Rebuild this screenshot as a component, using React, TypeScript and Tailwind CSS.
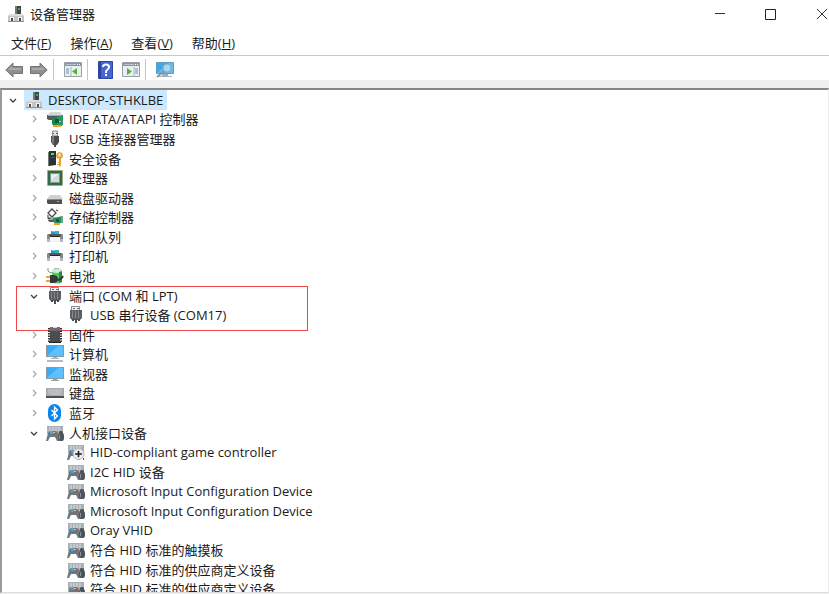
import type { ReactNode } from "react";
import clsx from "clsx";

interface TreeItem {
  label: string;
  level: number;
  icon: ReactNode;
  state?: "open" | "closed";
  selected?: boolean;
  marked?: boolean;
}

function Icon({ children }: { children: ReactNode }) {
  return (
    <svg viewBox="0 0 18 18" className="w-[18px] h-[18px] shrink-0" aria-hidden="true">
      {children}
    </svg>
  );
}

/* ---------- device icons ---------- */

function ComputerNodeIcon() {
  return (
    <Icon>
      <path d="M8 1h6v9H8z" fill="#3f4447" />
      <path d="M8 1h2v9H8z" fill="#74787a" />
      <path d="M11 3h2v2h-2z" fill="#3fae49" />
      <path d="M3 9h12l2 2v6H1v-6z" fill="#c3c5c7" />
      <path d="M3 9h12l2 2H1z" fill="#dcdddd" />
      <path d="M3 12h4v4H3zM11 12h4v4h-4z" fill="#f2f2f2" />
      <path d="M4 13h2v3H4zM12 13h2v3h-2z" fill="#4b4d4f" />
      <path d="M1 16h16v1H1z" fill="#8d8f91" />
    </Icon>
  );
}

function IdeIcon() {
  return (
    <Icon>
      <path d="M4 2h10l3 4H1z" fill="#d4d6d7" />
      <path d="M1 5h16v5H3L1 9z" fill="#55595b" />
      <path d="M2 5h14v1H2z" fill="#a9adaf" />
      <path d="M6 8h10v8H8l-2-2z" fill="#1f8455" />
      <path d="M11 7l6-2v10h-6z" fill="#2b9765" />
      <path d="M9 9h4v4H9z" fill="#0e5a38" />
      <path d="M13 11h2v1h-2z" fill="#9fe0b8" />
      <path d="M7 15h8v2H7z" fill="#e8a524" />
    </Icon>
  );
}

function UsbIcon() {
  return (
    <Icon>
      <path d="M6.500 1h5v5h-5z" fill="#e6e6e6" stroke="#8a8a8a" strokeWidth="1" />
      <path d="M7 3h1v1H7zM10 3h1v1h-1z" fill="#555" />
      <path d="M5 6h8v6l-2 3H7l-2-3z" fill="#4a4d50" />
      <path d="M6 6h2v7l-1 1-1-2z" fill="#7b7e80" />
      <path d="M8 14h2v3H8z" fill="#4a4d50" />
    </Icon>
  );
}

function SecurityIcon() {
  return (
    <Icon>
      <path d="M2 2h2v14H2z" fill="#777b7d" />
      <path d="M3 1h7v14l-7 1z" fill="#2d3234" />
      <path d="M5 3h3v2H5z" fill="#3df060" />
      <path d="M5 7h4v1H5z" fill="#50565a" />
      <circle cx="13.500" cy="5.500" r="2.600" fill="#f3c66a" stroke="#dd9a24" strokeWidth="1.300" />
      <circle cx="13.500" cy="4.500" r="1" fill="#fff" />
      <path d="M13 8h2v7l-1 2-1-1v-1h-2v-1h2v-1h-1v-1h1z" fill="#e5a42e" />
    </Icon>
  );
}

function ProcessorIcon() {
  return (
    <Icon>
      <rect x="1.500" y="1.500" width="15" height="15" fill="#2c6b4d" stroke="#b9a24e" strokeWidth="1" strokeDasharray="1 1" />
      <rect x="2" y="2" width="14" height="14" fill="#2c6b4d" />
      <rect x="4" y="4" width="10" height="10" fill="#7f998c" />
      <rect x="5" y="5" width="8" height="8" fill="#d6d9d7" />
      <path d="M5 5h8L5 11z" fill="#ececec" />
    </Icon>
  );
}

function DiskIcon() {
  return (
    <Icon>
      <path d="M4 6h10l3 4H1z" fill="#cfd1d2" />
      <path d="M1 10h15v5H2l-1-1z" fill="#4b4f51" />
      <path d="M1 10h15v1H1z" fill="#85898b" />
      <path d="M11 12h2v1h-2z" fill="#4ee36a" />
    </Icon>
  );
}

function StorageIcon() {
  return (
    <Icon>
      <path d="M6 1l4 4-4 4-4-4z" fill="#fff" stroke="#4a4a4a" strokeWidth="1.300" />
      <path d="M2 7v3h3M2 11h5M10 2l2 1" fill="none" stroke="#4a4a4a" strokeWidth="1.200" />
      <path d="M2 12l5-3 4 1v4H3z" fill="#a4a8aa" />
      <path d="M2 12h5v2H4z" fill="#4d5153" />
      <path d="M7 10l10-2v7H9l-2-1z" fill="#2a8a60" />
      <path d="M10 11h3v3h-3z" fill="#12613d" />
      <path d="M15 8h2v7h-2z" fill="#68a78c" />
      <path d="M8 15h6v2H8z" fill="#efa51d" />
    </Icon>
  );
}

function PrinterIcon() {
  return (
    <Icon>
      <path d="M5 3h4v3H5z" fill="#2692e6" />
      <path d="M9 3h4v3H9z" fill="#35b59a" />
      <path d="M6 3h3v1H6z" fill="#8cc8f5" />
      <path d="M2 6h14l1 1v7h-3V9H4v5H1V7z" fill="#85888b" />
      <path d="M3 6h12v2H3z" fill="#55595c" />
      <path d="M1 11h3v3H1zM14 11h3v3h-3z" fill="#b4b7ba" />
      <path d="M5 9h8l1 5H4z" fill="#f4f4f4" />
      <path d="M4 8h10v1H4z" fill="#25282a" />
    </Icon>
  );
}

function BatteryIcon() {
  return (
    <Icon>
      <path d="M2 1v3q1 2 5 2" fill="none" stroke="#8b8b8b" strokeWidth="1" />
      <path d="M8 1h5v2H8z" fill="#b7babc" />
      <path d="M6 3q5-2 10 0v12q-5 3-10 0z" fill="#4fc862" />
      <path d="M6 3q5-2 10 0v2q-5 2-10 0z" fill="#c9f2ce" />
      <path d="M13 5l3-1v11l-3 1z" fill="#2b8b3b" />
      <path d="M0 9h6v2H0zM0 13h6v2H0z" fill="#e3a645" />
      <path d="M4 8h3q5 0 5 4t-5 4H4z" fill="#36393b" />
      <path d="M11 13q4 0 6-4" fill="none" stroke="#36393b" strokeWidth="2" />
    </Icon>
  );
}

function PortIcon() {
  return (
    <Icon>
      <path d="M4.500 0.500h8v4h-8z" fill="#efefef" stroke="#8d8d8d" />
      <path d="M6 2h2v1H6zM10 2h2v1h-2z" fill="#6a6a6a" />
      <path d="M3 4h12v8l-2 2H5l-2-2z" fill="#5c5f61" />
      <path d="M5 5h1v7H5zM8 5h1v7H8zM11 5h1v7h-1z" fill="#85888a" />
      <path d="M5 13h2v2H5zM8 13h2v4H8zM11 13h2v2h-2z" fill="#4b4e50" />
    </Icon>
  );
}

function FirmwareIcon() {
  return (
    <Icon>
      <path d="M4 1h10v16H4z" fill="#4a4c4e" />
      <path d="M4 1h10v4H4z" fill="#6b6d6f" />
      <path d="M7 1h4v1H7z" fill="#ddd" />
      <path d="M3 2v15M15 2v15" stroke="#333" strokeWidth="2" strokeDasharray="1.500 1" />
      <path d="M3 16h12v1H3z" fill="#222" />
    </Icon>
  );
}

function ScreenIcon({ base }: { base?: boolean }) {
  return (
    <Icon>
      <rect x="0.500" y={base ? "0.500" : "2.500"} width="17" height="11" fill="#3cabf5" stroke="#8799a6" />
      <path d={base ? "M1 11L12 1h5v10z" : "M1 13L12 3h5v10z"} fill="#5cc0ff" />
      {base ? (
        <>
          <path d="M7 12h4v1H7zM5 13h8v1H5z" fill="#a9b6bf" />
          <path d="M1 15h16v2H1z" fill="#b1bdc6" />
        </>
      ) : (
        <path d="M7 14h4v1H7zM5 15h8v1H5z" fill="#93a0a8" />
      )}
    </Icon>
  );
}

function KeyboardIcon() {
  return (
    <Icon>
      <path d="M0 4h18v9H0z" fill="#a6abaf" />
      <path d="M2 6h14M2 8h14M3 10h12" stroke="#d9dcde" strokeWidth="1" strokeDasharray="1.500 0.500" />
      <path d="M0 12h18v2H0z" fill="#4c5053" />
    </Icon>
  );
}

function BluetoothIcon() {
  return (
    <Icon>
      <rect x="2" y="0" width="13" height="18" rx="6.500" fill="#0a84f0" />
      <path d="M5.500 6l6 6-3 3V3l3 3-6 6" fill="none" stroke="#fff" strokeWidth="1.300" />
    </Icon>
  );
}

function HidBase() {
  return (
    <>
      <path d="M1 2h16v8H1z" fill="#a9b0b6" />
      <path d="M3 4h12M3 6h12" stroke="#dfe3e6" strokeWidth="1" strokeDasharray="2 1" />
      <path d="M2 9q1-2 3-2h4q2 0 3 2l1 8h-2l-2-4H4l-2 4H0z" fill="#6d777f" />
      <path d="M4 7h3v3H4z" fill="#3ba4ea" />
    </>
  );
}

function HidIcon() {
  return (
    <Icon>
      <HidBase />
      <path d="M7 8h2v1H7z" fill="#f0c05c" />
      <path d="M8 9h2v2H8z" fill="#b8543f" />
      <path d="M13 8q0-1 2-1t2 1v1q1 1 1 3v2q0 3-2 3h-2q-2 0-2-3v-2q0-2 1-3z" fill="#4c555b" />
      <path d="M13 11h1v4h-1z" fill="#8b959b" />
    </Icon>
  );
}

function GameControllerIcon() {
  return (
    <Icon>
      <HidBase />
      <circle cx="11.500" cy="11" r="5.500" fill="#ececec" stroke="#a9a9a9" strokeWidth="0.800" />
      <path d="M11 8h1v2.500h2.500v1H12V14h-1v-2.500H8.500v-1H11z" fill="#222" stroke="#222" strokeWidth="0.600" />
      <path d="M16 15h1v2h-1z" fill="#555" />
    </Icon>
  );
}

/* ---------- toolbar icons ---------- */

function ArrowIcon({ flip }: { flip?: boolean }) {
  return (
    <svg viewBox="0 0 18 16" className={clsx("w-[18px] h-4", flip && "-scale-x-100")} aria-hidden="true">
      <path d="M0.800 8L8 1V4.500h9.500v7H8V15z" fill="#8f8f8f" stroke="#747474" strokeWidth="1" strokeLinejoin="round" />
      <path d="M3 8l4-4v2h9v2z" fill="#a9a9a9" />
    </svg>
  );
}

function PanelIcon({ flip }: { flip?: boolean }) {
  return (
    <svg viewBox="0 0 18 15" className="w-[18px] h-[15px]" aria-hidden="true">
      <path d="M0.500 0.500h17v14h-17z" fill="#eceff2" stroke="#98a1ab" />
      <path d="M1 1h16v3H1z" fill="#8995a3" />
      <path d="M2 2h10v1H2z" fill="#bac3cd" />
      <path d="M13 2h1v1h-1zM15 2h1v1h-1z" fill="#fff" />
      {flip ? (
        <>
          <path d="M12 5v9" stroke="#aab4be" />
          <path d="M13 7h3M13 9h3M13 11h3" stroke="#6d91ae" />
          <path d="M5 6l5 3.500L5 13z" fill="#4db63b" />
        </>
      ) : (
        <>
          <path d="M7 5v9" stroke="#aab4be" />
          <path d="M2 7h3M2 9h3M2 11h3" stroke="#6d91ae" />
          <path d="M13 6L8 9.500l5 3.500z" fill="#4db63b" />
        </>
      )}
    </svg>
  );
}

function HelpIcon() {
  return (
    <svg viewBox="0 0 15 18" className="w-[15px] h-[18px]" aria-hidden="true">
      <path d="M0.500 0.500h14v17h-14z" fill="#4467cf" stroke="#2c47a3" />
      <path d="M1 1h2v16H1z" fill="#2a44a0" />
      <path d="M5 6q0-2.500 3-2.500t3 2.500q0 1.500-1.500 2.500T8 11v1" fill="none" stroke="#fff" strokeWidth="2" />
      <path d="M7 13h2v2H7z" fill="#fff" />
    </svg>
  );
}

function ScanIcon() {
  return (
    <svg viewBox="0 0 19 18" className="w-[19px] h-[18px]" aria-hidden="true">
      <path d="M1.500 1.500h17v11h-17z" fill="#3fa9e8" stroke="#5b9ec6" />
      <path d="M2 12L14 2h4v10z" fill="#64bdf0" />
      <path d="M7 13h6v2H7zM4 15h13v1H4z" fill="#a3afb8" />
      <circle cx="12" cy="7" r="4" fill="#a5d8f5" stroke="#8aa8b9" strokeWidth="1.200" />
      <path d="M9 10l-7 6" stroke="#8297a3" strokeWidth="2" />
    </svg>
  );
}

/* ---------- data ---------- */

const items: TreeItem[] = [
  { label: "DESKTOP-STHKLBE", level: 0, icon: <ComputerNodeIcon />, state: "open", selected: true },
  { label: "IDE ATA/ATAPI 控制器", level: 1, icon: <IdeIcon />, state: "closed" },
  { label: "USB 连接器管理器", level: 1, icon: <UsbIcon />, state: "closed" },
  { label: "安全设备", level: 1, icon: <SecurityIcon />, state: "closed" },
  { label: "处理器", level: 1, icon: <ProcessorIcon />, state: "closed" },
  { label: "磁盘驱动器", level: 1, icon: <DiskIcon />, state: "closed" },
  { label: "存储控制器", level: 1, icon: <StorageIcon />, state: "closed" },
  { label: "打印队列", level: 1, icon: <PrinterIcon />, state: "closed" },
  { label: "打印机", level: 1, icon: <PrinterIcon />, state: "closed" },
  { label: "电池", level: 1, icon: <BatteryIcon />, state: "closed" },
  { label: "端口 (COM 和 LPT)", level: 1, icon: <PortIcon />, state: "open", marked: true },
  { label: "USB 串行设备 (COM17)", level: 2, icon: <PortIcon /> },
  { label: "固件", level: 1, icon: <FirmwareIcon />, state: "closed" },
  { label: "计算机", level: 1, icon: <ScreenIcon base />, state: "closed" },
  { label: "监视器", level: 1, icon: <ScreenIcon />, state: "closed" },
  { label: "键盘", level: 1, icon: <KeyboardIcon />, state: "closed" },
  { label: "蓝牙", level: 1, icon: <BluetoothIcon />, state: "closed" },
  { label: "人机接口设备", level: 1, icon: <HidIcon />, state: "open" },
  { label: "HID-compliant game controller", level: 2, icon: <GameControllerIcon /> },
  { label: "I2C HID 设备", level: 2, icon: <HidIcon /> },
  { label: "Microsoft Input Configuration Device", level: 2, icon: <HidIcon /> },
  { label: "Microsoft Input Configuration Device", level: 2, icon: <HidIcon /> },
  { label: "Oray VHID", level: 2, icon: <HidIcon /> },
  { label: "符合 HID 标准的触摸板", level: 2, icon: <HidIcon /> },
  { label: "符合 HID 标准的供应商定义设备", level: 2, icon: <HidIcon /> },
  { label: "符合 HID 标准的供应商定义设备", level: 2, icon: <HidIcon /> },
];

const menus = [
  { label: "文件", hotkey: "F" },
  { label: "操作", hotkey: "A" },
  { label: "查看", hotkey: "V" },
  { label: "帮助", hotkey: "H" },
];

const indents = ["pl-[6px]", "pl-[27px]", "pl-[48px]"];

function Chevron({ open }: { open: boolean }) {
  return (
    <svg viewBox="0 0 10 10" className="w-[10px] h-[10px]" aria-hidden="true">
      {open ? (
        <path d="M2 4l3 3 3-3" fill="none" stroke="#404040" strokeWidth="1.300" />
      ) : (
        <path d="M4 2l3 3-3 3" fill="none" stroke="#a6a6a6" strokeWidth="1.200" />
      )}
    </svg>
  );
}

function TreeRow({ item }: { item: TreeItem }) {
  return (
    <li
      role="treeitem"
      aria-level={item.level + 1}
      aria-expanded={item.state ? item.state === "open" : undefined}
      aria-selected={!!item.selected}
      className={clsx("relative flex items-center", indents[item.level])}
    >
      {item.state && (
        <button aria-label={item.label} className="w-[10px] mr-[6px] flex items-center">
          <Chevron open={item.state === "open"} />
        </button>
      )}
      {!item.state && <span className="w-[16px]" />}
      <span className={clsx("flex items-center gap-[5px] h-full pl-px pr-1", item.selected && "bg-[#cce8ff]")}>
        {item.icon}
        <span className="whitespace-nowrap">{item.label}</span>
      </span>
      {/* Outline around the COM port group */}
      {item.marked && (
        <span className="absolute left-[14px] top-0 w-[292px] h-[45px] border border-[#f04848] pointer-events-none" />
      )}
    </li>
  );
}

function Separator() {
  return <span className="w-px self-stretch bg-[#c4c4c4]" />;
}

export default function App() {
  return (
    <div className="h-screen flex flex-col overflow-hidden bg-white text-[#1a1a1a] text-[13px] leading-[18px] font-['Open_Sans','Noto_Sans_CJK_SC',sans-serif]">
      {/* Title bar */}
      <header className="flex items-stretch h-7 shrink-0">
        <div className="flex items-center gap-[5px] pl-[7px] flex-1">
          <ComputerNodeIcon />
          <h1>设备管理器</h1>
        </div>
        <button aria-label="Minimize" className="w-[50px] flex items-center justify-center">
          <svg viewBox="0 0 12 12" className="w-3 h-3"><path d="M1 5.500h10" stroke="#333" /></svg>
        </button>
        <button aria-label="Maximize" className="w-[50px] flex items-center justify-center">
          <svg viewBox="0 0 12 12" className="w-3 h-3"><path d="M1.500 1.500h10v10h-10z" fill="none" stroke="#222" /></svg>
        </button>
        <button aria-label="Close" className="w-[34px] pr-px flex items-center justify-end">
          <svg viewBox="0 0 12 12" className="w-3 h-3"><path d="M1 1l10 10M11 1L1 11" stroke="#333" /></svg>
        </button>
      </header>

      {/* Menu bar */}
      <nav className="flex items-center gap-[19px] h-[27px] pt-[2px] pl-[11px] shrink-0">
        {menus.map((menu) => (
          <button key={menu.hotkey}>
            {menu.label}(<u>{menu.hotkey}</u>)
          </button>
        ))}
      </nav>

      {/* Toolbar */}
      <div className="flex items-center h-[25px] shrink-0 border-t border-[#c8c8c8] pt-[3px] pl-[5px]">
        <div className="flex items-center gap-[7px] pr-[5px]">
          <button aria-label="Back"><ArrowIcon /></button>
          <button aria-label="Forward"><ArrowIcon flip /></button>
        </div>
        <Separator />
        <button aria-label="Console tree" className="pl-[10px] pr-[5px]"><PanelIcon /></button>
        <Separator />
        <div className="flex items-center gap-[9px] pl-[10px] pr-[5px]">
          <button aria-label="Help"><HelpIcon /></button>
          <button aria-label="Action pane"><PanelIcon flip /></button>
        </div>
        <Separator />
        <button aria-label="Scan for hardware changes" className="pl-[9px]"><ScanIcon /></button>
      </div>

      {/* Device tree */}
      <main className="flex-1 min-h-0 flex flex-col bg-[#f0f0f0] pt-2 pb-px">
        <div className="flex-1 min-h-0 overflow-hidden bg-white border-t-2 border-l-2 border-t-[#868686] border-l-[#9a9a9a] border-r border-r-[#ececec] border-b border-b-[#dcdcdc]">
          <ul role="tree" className="grid auto-rows-fr h-[509px]">
            {items.map((item, index) => (
              <TreeRow key={index} item={item} />
            ))}
          </ul>
        </div>
      </main>
    </div>
  );
}
